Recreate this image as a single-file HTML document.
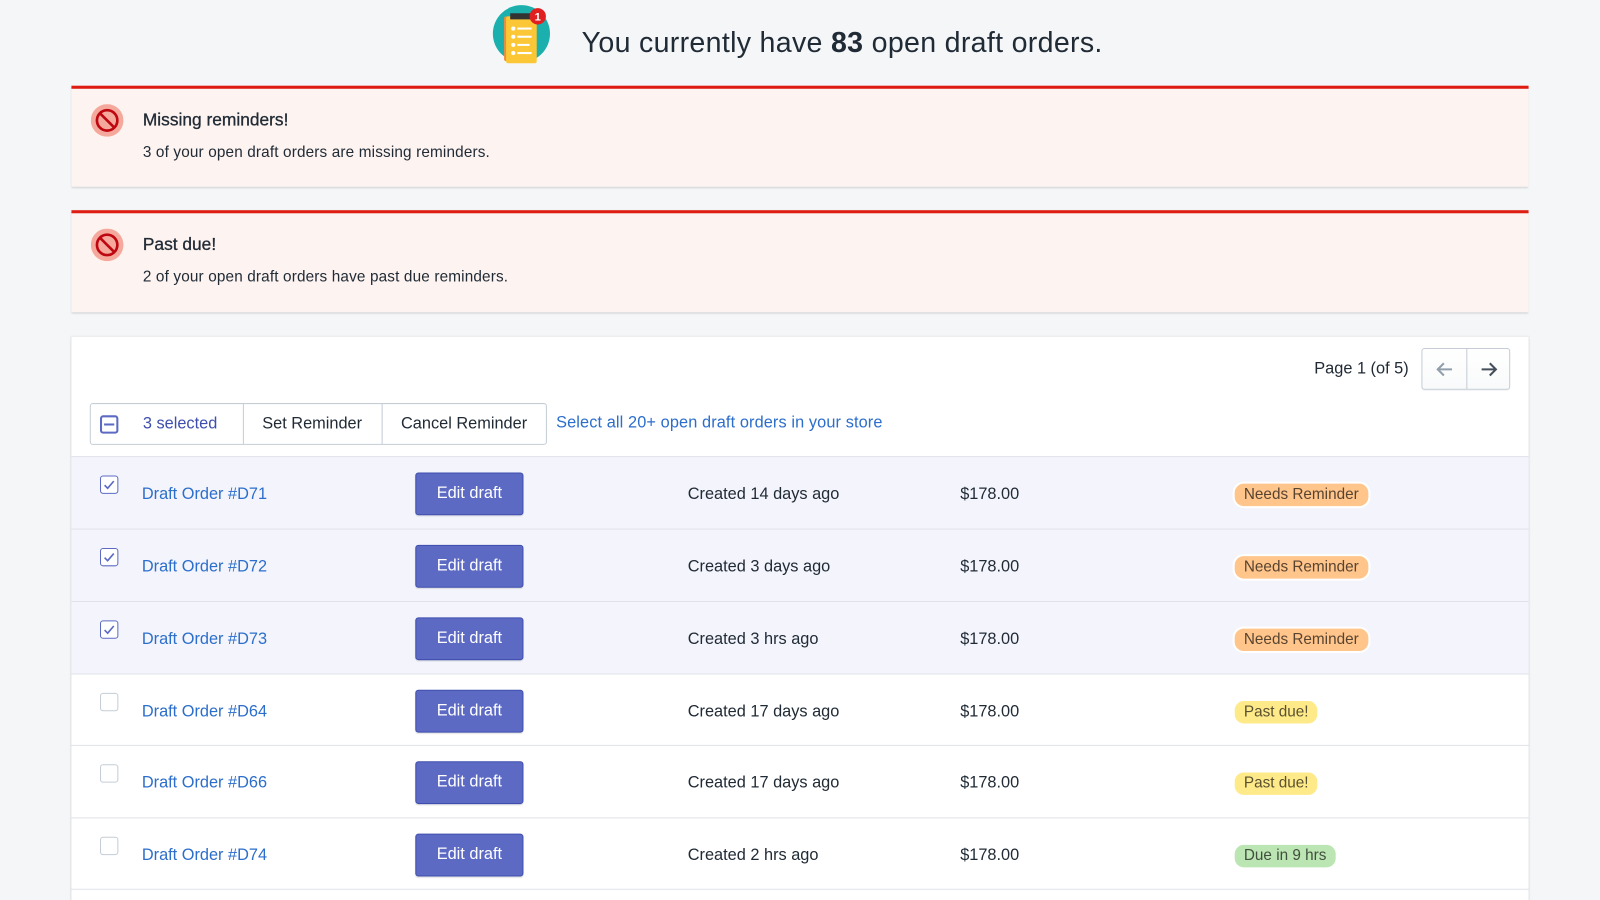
<!DOCTYPE html>
<html><head><meta charset="utf-8"><style>
*{box-sizing:border-box;margin:0;padding:0}
html,body{width:1600px;height:900px;overflow:hidden}
body{background:#f4f6f8;font-family:"Liberation Sans",sans-serif;color:#212b36;position:relative}
#w{position:absolute;left:0;top:0;width:1568px;height:882px;transform:scale(1.0204);transform-origin:0 0;overflow:hidden}
.abs{position:absolute}
.head{left:570px;top:26px;font-size:28px;color:#212b36;letter-spacing:.3px}
.banner{left:70px;width:1428px;background:#fdf3f0;border-top:3px solid #de1c12;box-shadow:0 1px 2px rgba(0,0,0,.15)}
.banner h3{position:absolute;left:70px;top:21px;font-size:17px;font-weight:normal;color:#212b36;-webkit-text-stroke:.3px #212b36}
.banner p{position:absolute;left:70px;top:54px;font-size:15px;letter-spacing:.15px}
.banner svg{position:absolute;left:19px;top:15px}
.card{left:70px;top:330px;width:1428px;height:560px;background:#fff;box-shadow:0 0 0 1px rgba(63,63,68,.06),0 1px 3px rgba(63,63,68,.15)}
.row{position:absolute;left:0;width:1428px;height:71px;border-top:1px solid #dfe3e8;font-size:16px}
.sel{background:#f4f5fc}
.cb{position:absolute;left:28px;top:18px;width:18px;height:18px;border:1px solid #c4cdd5;border-radius:3px;background:#fff}
.sel .cb{border-color:#5c6ac4}
.link{position:absolute;left:69px;top:28px;color:#2c6ecb}
.btn{position:absolute;left:337px;top:15px;width:106px;height:42px;background:#5c6ac4;border:1px solid #3f4eae;border-radius:3px;color:#fff;text-align:center;line-height:40px;box-shadow:0 1px 1px rgba(0,0,0,.1)}
.c3{position:absolute;left:604px;top:28px}
.c4{position:absolute;left:871px;top:28px}
.badge{position:absolute;left:1140px;top:26px;padding:0 9px;height:22px;line-height:22px;border-radius:11px;font-size:15px;border:2px solid #fff;box-sizing:content-box;margin-top:-2px;margin-left:-2px}
.or{background:#ffc58b;color:#594430}.ye{background:#ffea8a;color:#595130}.gr{background:#bbe5b3;color:#414f3e}
</style></head><body><div id="w">
<svg class="abs" style="left:482px;top:3px" width="60" height="60" viewBox="0 0 60 60">
<circle cx="29" cy="30" r="28" fill="#1bb0ae"/>
<rect x="12" y="13" width="30" height="44" rx="2" fill="#ef8d3b"/>
<rect x="14" y="13" width="30" height="46" rx="2" fill="#fcc736"/>
<rect x="18" y="10" width="20" height="6" fill="#333"/>
<g fill="#fff"><circle cx="21" cy="25" r="2"/><circle cx="21" cy="33" r="2"/><circle cx="21" cy="41" r="2"/><circle cx="21" cy="49" r="2"/>
<rect x="25" y="24" width="14" height="2"/><rect x="25" y="32" width="14" height="2"/><rect x="25" y="40" width="12" height="2"/><rect x="25" y="48" width="14" height="2"/></g>
<circle cx="45" cy="13" r="8" fill="#e02020"/><text x="45" y="17" font-size="11" font-weight="bold" fill="#fff" text-anchor="middle" font-family="Liberation Sans">1</text>
</svg>
<div class="abs head">You currently have <b>83</b> open draft orders.</div>

<div class="abs banner" style="top:84px;height:99px">
<svg width="32" height="32" viewBox="0 0 32 32"><circle cx="16" cy="16" r="16" fill="#f5a99d"/><circle cx="16" cy="16" r="10" fill="none" stroke="#bf0711" stroke-width="2.6"/><line x1="9" y1="9" x2="23" y2="23" stroke="#bf0711" stroke-width="2.6"/></svg>
<h3>Missing reminders!</h3><p>3 of your open draft orders are missing reminders.</p></div>
<div class="abs banner" style="top:206px;height:100px">
<svg width="32" height="32" viewBox="0 0 32 32"><circle cx="16" cy="16" r="16" fill="#f5a99d"/><circle cx="16" cy="16" r="10" fill="none" stroke="#bf0711" stroke-width="2.6"/><line x1="9" y1="9" x2="23" y2="23" stroke="#bf0711" stroke-width="2.6"/></svg>
<h3>Past due!</h3><p>2 of your open draft orders have past due reminders.</p></div>

<div class="abs card">
<div class="abs" style="left:1218px;top:23px;font-size:16px">Page 1 (of 5)</div>
<div class="abs" style="left:1323px;top:11px;width:87px;height:41px;border:1px solid #c4cdd5;border-radius:3px;background:linear-gradient(#fff,#f9fafb);box-shadow:0 1px 0 rgba(22,29,37,.05)">
<div class="abs" style="left:43px;top:0;width:1px;height:39px;background:#c4cdd5"></div>
<svg class="abs" style="left:12px;top:10px" width="20" height="20" viewBox="0 0 20 20"><path d="M17 10H3M9 4L3 10l6 6" fill="none" stroke="#919eab" stroke-width="2"/></svg>
<svg class="abs" style="left:55px;top:10px" width="20" height="20" viewBox="0 0 20 20"><path d="M3 10h14M11 4l6 6-6 6" fill="none" stroke="#454f5b" stroke-width="2"/></svg>
</div>
<div class="abs" style="left:18px;top:65px;width:448px;height:41px;border:1px solid #c4cdd5;border-radius:3px;background:#fff;font-size:16px">
<div class="abs" style="left:9px;top:11px;width:18px;height:18px;border:2px solid #5c6ac4;border-radius:3px"><div class="abs" style="left:2px;top:6px;width:10px;height:2px;background:#5c6ac4"></div></div>
<div class="abs" style="left:51px;top:11px;color:#3f4eae">3 selected</div>
<div class="abs" style="left:149px;top:0;width:1px;height:39px;background:#c4cdd5"></div>
<div class="abs" style="left:168px;top:11px">Set Reminder</div>
<div class="abs" style="left:285px;top:0;width:1px;height:39px;background:#c4cdd5"></div>
<div class="abs" style="left:304px;top:11px">Cancel Reminder</div>
</div>
<div class="abs" style="left:475px;top:76px;font-size:16px;color:#2c6ecb;letter-spacing:.1px">Select all 20+ open draft orders in your store</div>

<div class="row sel" style="top:117px"><div class="cb"><svg width="16" height="16" viewBox="0 0 16 16"><path d="M3.5 8.5l3 3 6-7" fill="none" stroke="#5c6ac4" stroke-width="1.6"/></svg></div><div class="link">Draft Order #D71</div><div class="btn">Edit draft</div><div class="c3">Created 14 days ago</div><div class="c4">$178.00</div><div class="badge or">Needs Reminder</div></div>
<div class="row sel" style="top:188px"><div class="cb"><svg width="16" height="16" viewBox="0 0 16 16"><path d="M3.5 8.5l3 3 6-7" fill="none" stroke="#5c6ac4" stroke-width="1.6"/></svg></div><div class="link">Draft Order #D72</div><div class="btn">Edit draft</div><div class="c3">Created 3 days ago</div><div class="c4">$178.00</div><div class="badge or">Needs Reminder</div></div>
<div class="row sel" style="top:259px"><div class="cb"><svg width="16" height="16" viewBox="0 0 16 16"><path d="M3.5 8.5l3 3 6-7" fill="none" stroke="#5c6ac4" stroke-width="1.6"/></svg></div><div class="link">Draft Order #D73</div><div class="btn">Edit draft</div><div class="c3">Created 3 hrs ago</div><div class="c4">$178.00</div><div class="badge or">Needs Reminder</div></div>
<div class="row" style="top:330px"><div class="cb"></div><div class="link">Draft Order #D64</div><div class="btn">Edit draft</div><div class="c3">Created 17 days ago</div><div class="c4">$178.00</div><div class="badge ye">Past due!</div></div>
<div class="row" style="top:400px"><div class="cb"></div><div class="link">Draft Order #D66</div><div class="btn">Edit draft</div><div class="c3">Created 17 days ago</div><div class="c4">$178.00</div><div class="badge ye">Past due!</div></div>
<div class="row" style="top:471px"><div class="cb"></div><div class="link">Draft Order #D74</div><div class="btn">Edit draft</div><div class="c3">Created 2 hrs ago</div><div class="c4">$178.00</div><div class="badge gr">Due in 9 hrs</div></div>
<div class="row" style="top:541px"></div>
</div>
</div></body></html>
